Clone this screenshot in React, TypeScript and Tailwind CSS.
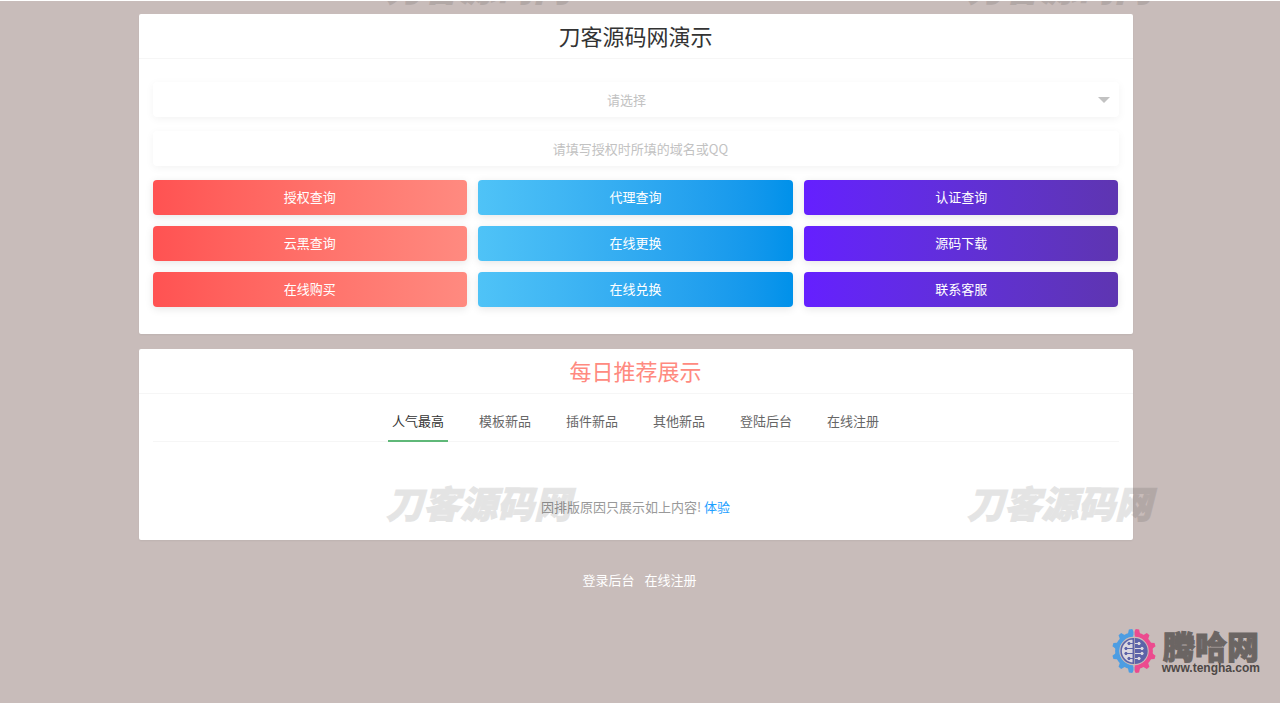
import { useState } from 'react';

const ACTIONS = [
  { label: '授权查询', tone: 'from-[#ff5252] to-[#ff8a80]' },
  { label: '代理查询', tone: 'from-[#4fc3f7] to-[#0091ea]' },
  { label: '认证查询', tone: 'from-[#651fff] to-[#5e35b1]' },
  { label: '云黑查询', tone: 'from-[#ff5252] to-[#ff8a80]' },
  { label: '在线更换', tone: 'from-[#4fc3f7] to-[#0091ea]' },
  { label: '源码下载', tone: 'from-[#651fff] to-[#5e35b1]' },
  { label: '在线购买', tone: 'from-[#ff5252] to-[#ff8a80]' },
  { label: '在线兑换', tone: 'from-[#4fc3f7] to-[#0091ea]' },
  { label: '联系客服', tone: 'from-[#651fff] to-[#5e35b1]' },
];

const TABS = ['人气最高', '模板新品', '插件新品', '其他新品', '登陆后台', '在线注册'];

const WATERMARKS = ['left-[386px] -top-8', 'left-[967px] -top-8', 'left-[386px] top-[485px]', 'left-[967px] top-[485px]'];

const TEETH = [9, 40, 73, 107, 140, 171];

const GearLogo = () => (
  <svg viewBox="0 0 44 44" className="h-11 w-11" aria-hidden="true">
    {/* teeth and ring, blue on the left and pink on the right */}
    {TEETH.map((angle) => (
      <g key={angle}>
        <path d="M18 6 20.300 0h3.400L26 6z" fill="#ec4b8f" transform={`rotate(${angle} 22 22)`} />
        <path d="M18 6 20.300 0h3.400L26 6z" fill="#4d9de2" transform={`rotate(${-angle} 22 22)`} />
      </g>
    ))}
    <path d="M21.500 5.700a16.300 16.300 0 0 0 0 32.600" fill="none" stroke="#4d9de2" strokeWidth="4.200" />
    <path d="M22.500 5.700a16.300 16.300 0 0 1 0 32.600" fill="none" stroke="#ec4b8f" strokeWidth="4.200" />
    <path d="M22 0v44" stroke="#c8bcba" />
    <circle cx="22" cy="22" r="14.200" fill="#c8bcba" />
    <path d="M21.300 9.800a12.200 12.200 0 0 0 0 24.400z" fill="#dcd8e0" stroke="#5d63a8" strokeWidth="1.500" />
    <path d="M22.700 9a13 13 0 0 1 0 26z" fill="#5d63a8" />
    <g stroke="#5d63a8" fill="#5d63a8">
      <path d="M21 14.500h-3M21 19.500h-6M21 24.500h-6M21 29.500h-3" />
      <circle cx="17" cy="14.500" r="1.200" />
      <circle cx="14" cy="19.500" r="1.200" />
      <circle cx="14" cy="24.500" r="1.200" />
      <circle cx="17" cy="29.500" r="1.200" />
    </g>
    <g stroke="#dcd8e0" fill="#dcd8e0">
      <path d="M23 14.500h3M23 19.500h6M23 24.500h6M23 29.500h3" />
      <circle cx="27" cy="14.500" r="1.200" />
      <circle cx="30" cy="19.500" r="1.200" />
      <circle cx="30" cy="24.500" r="1.200" />
      <circle cx="27" cy="29.500" r="1.200" />
    </g>
  </svg>
);

export default function App() {
  const [activeTab, setActiveTab] = useState(TABS[0]);
  const [domain, setDomain] = useState('');

  return (
    <div className="relative min-h-screen overflow-hidden border-t border-white bg-[#c8bcba] pr-[9px] font-['Noto_Sans_CJK_SC',sans-serif] text-[13px] leading-5">
      <main className="mx-auto mt-[13px] flex max-w-[994px] flex-col gap-[15px]">
        <section className="rounded-xs bg-white pb-[27px] shadow-xs">
          <h1 className="border-b border-[#f6f6f6] pb-0.5 text-center text-[22px] leading-[42px] text-[#333]">刀客源码网演示</h1>
          <form className="flex flex-col gap-3.5 px-3.5 pt-[23px]" onSubmit={(e) => e.preventDefault()}>
            <div className="relative">
              <select
                aria-label="请选择"
                defaultValue=""
                className="h-[35px] w-full appearance-none rounded-sm bg-white pr-7 pl-2.5 text-center text-[#c2c2c2] shadow-[0_2px_8px_rgba(0,0,0,0.05)] outline-none [text-align-last:center]"
              >
                <option value="">请选择</option>
              </select>
              <svg viewBox="0 0 12 6" className="pointer-events-none absolute top-[15px] right-[9px] h-1.5 w-3" aria-hidden="true">
                <path d="M0 0h12L6 6z" fill="#c2c2c2" />
              </svg>
            </div>
            <input
              type="text"
              value={domain}
              onChange={(e) => setDomain(e.target.value)}
              aria-label="请填写授权时所填的域名或QQ"
              placeholder="请填写授权时所填的域名或QQ"
              className="h-[35px] w-full rounded-sm bg-white pl-2.5 text-center text-[#333] shadow-[0_2px_8px_rgba(0,0,0,0.05)] outline-none placeholder:text-[#c2c2c2]"
            />
            <div className="grid grid-cols-3 gap-[11px]">
              {ACTIONS.map((action) => (
                <button
                  key={action.label}
                  type="button"
                  className={`h-[35px] rounded-sm bg-linear-to-r pb-px text-white shadow-[0_2px_8px_rgba(0,0,0,0.1)] ${action.tone}`}
                >
                  {action.label}
                </button>
              ))}
            </div>
          </form>
        </section>

        <section className="rounded-xs bg-white pb-[23px] shadow-xs">
          <h2 className="border-b border-[#f6f6f6] pb-0.5 text-center text-[22px] leading-[42px] text-[#ff8a80]">每日推荐展示</h2>
          <div className="mx-3.5 mt-2 flex justify-center gap-[27px] border-b border-[#f6f6f6]" role="tablist">
            {TABS.map((tab) => (
              <button
                key={tab}
                type="button"
                role="tab"
                aria-selected={tab === activeTab}
                onClick={() => setActiveTab(tab)}
                className={`-mb-px h-10 border-b-2 px-1 ${tab === activeTab ? 'border-[#5fb878] text-[#333]' : 'border-transparent text-[#666]'}`}
              >
                {tab}
              </button>
            ))}
          </div>
          <p className="mt-[55px] text-center text-[#999]">
            因排版原因只展示如上内容! <a href="#" className="text-[#1e9fff]">体验</a>
          </p>
        </section>
      </main>

      <footer className="mt-[30px] flex justify-center gap-2.5 pl-2 text-white">
        <a href="#">登录后台</a>
        <a href="#">在线注册</a>
      </footer>

      {WATERMARKS.map((place) => (
        <span
          key={place}
          aria-hidden="true"
          className={`pointer-events-none absolute text-[37px] leading-8 font-black whitespace-nowrap text-black italic opacity-10 select-none [-webkit-text-stroke:1px_black] ${place}`}
        >
          刀客源码网
        </span>
      ))}

      <div className="absolute right-5 bottom-[29px] flex items-center gap-1.5">
        <GearLogo />
        <div className="flex flex-col items-center">
          <span className="text-[32px] leading-[34px] font-black text-[#6b6563] [-webkit-text-stroke:1px_#6b6563]">腾哈网</span>
          <span className="font-['Liberation_Sans',sans-serif] text-xs leading-3 font-bold text-[#4d4846]">www.tengha.com</span>
        </div>
      </div>
    </div>
  );
}
